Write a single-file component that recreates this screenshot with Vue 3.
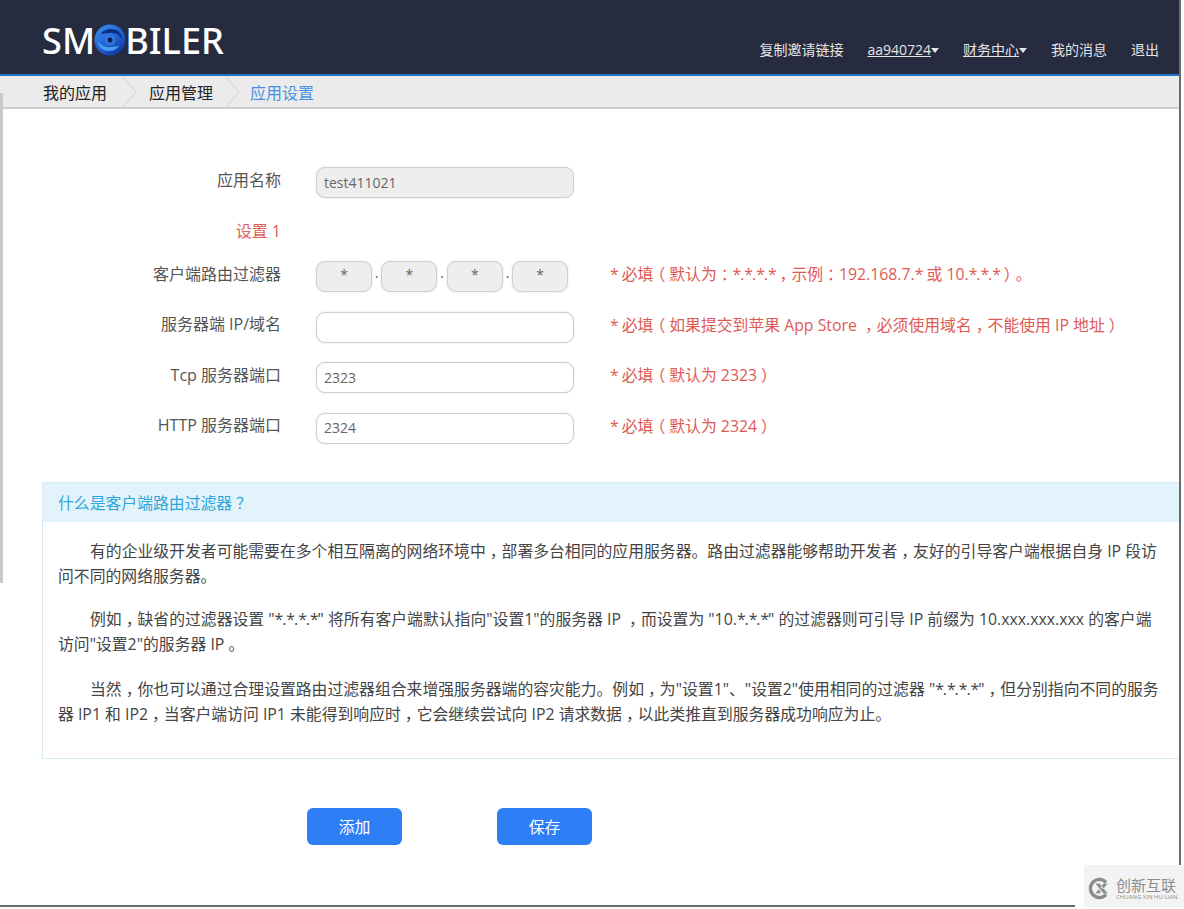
<template>
  <div class="page">
    <header class="topbar">
      <div class="logo">
        <span>SM</span>
        <svg class="logo__mark" width="32" height="32" viewBox="0 0 32 32" aria-hidden="true">
          <defs>
            <linearGradient id="swirl" x1="0.1" y1="0" x2="0.9" y2="1">
              <stop offset="0" stop-color="#3a8fee" />
              <stop offset="0.55" stop-color="#1f5fd0" />
              <stop offset="1" stop-color="#0e2f94" />
            </linearGradient>
          </defs>
          <circle cx="16" cy="16" r="15.5" fill="url(#swirl)" />
          <path d="M7 10C10 5 19 3 25 8c2 2 3 4 3 7-3-5-8-7-13-6-3 0-6 1-8 1z" fill="#0d2c86" />
          <path d="M25 22c-3 5-12 7-18 2-2-2-3-4-3-7 3 5 8 7 13 6 3 0 6-1 8-1z" fill="#4a9ff2" />
          <circle cx="16" cy="16" r="5.5" fill="#3078e0" />
          <circle cx="16" cy="16" r="2.5" fill="#0b1c52" />
        </svg>
        <span>BILER</span>
      </div>
      <nav class="topnav">
        <a>复制邀请链接</a>
        <a class="topnav__menu"><u>aa940724</u><i class="caret"></i></a>
        <a class="topnav__menu"><u>财务中心</u><i class="caret"></i></a>
        <a>我的消息</a>
        <a>退出</a>
      </nav>
    </header>

    <div class="crumbs">
      <template v-for="(c, i) in crumbs" :key="c">
        <span class="crumbs__item" :class="{ 'crumbs__item--on': i === crumbs.length - 1 }">{{ c }}</span>
        <svg v-if="i < crumbs.length - 1" class="crumbs__sep" width="16" height="32" viewBox="0 0 16 32" aria-hidden="true">
          <path d="M1 0l14 16L1 32" fill="none" stroke="#dcdcdc" stroke-width="1.5" />
        </svg>
      </template>
    </div>

    <main class="content">
      <form class="form" @submit.prevent>
        <label class="form__label">应用名称</label>
        <input class="field field--off" value="test411021" readonly />
        <span></span>

        <div class="form__label form__label--red form__label--section">设置 1</div>
        <span></span>
        <span></span>

        <label class="form__label">客户端路由过滤器</label>
        <div class="ip">
          <template v-for="n in 4" :key="n">
            <input class="field field--off ip__part" value="*" readonly />
            <span v-if="n < 4" class="ip__dot">.</span>
          </template>
        </div>
        <div class="form__hint">
          <span v-for="(s, i) in split(filterHint)" :key="i" :class="s.cls">{{ s.text }}</span>
        </div>

        <template v-for="r in rows" :key="r.label">
          <label class="form__label">{{ r.label }}</label>
          <input class="field" :value="r.value" />
          <div class="form__hint">
            <span v-for="(s, i) in split(r.hint)" :key="i" :class="s.cls">{{ s.text }}</span>
          </div>
        </template>
      </form>

      <section class="help">
        <h3 class="help__title">
          <span v-for="(s, i) in split(helpTitle)" :key="i" :class="s.cls">{{ s.text }}</span>
        </h3>
        <div class="help__body">
          <p v-for="(para, n) in paragraphs" :key="n">
            <span v-for="(s, i) in split(para)" :key="i" :class="s.cls">{{ s.text }}</span>
          </p>
        </div>
      </section>

      <div class="actions">
        <button class="btn" type="button">添加</button>
        <button class="btn" type="button">保存</button>
      </div>
    </main>

    <div class="edge-left"></div>
    <div class="watermark">
      <svg width="23" height="23" viewBox="0 0 28 28" aria-hidden="true">
        <path d="M22 6.5A11 11 0 1 0 22 21.5" fill="none" stroke="#8c8c8c" stroke-width="4" />
        <path d="M9 8l5 0 10 12-5 0zM24 8l-5 0-3.5 4 2.5 3zM9 20l5 0 1.5-2-2.5-3z" fill="#8c8c8c" />
      </svg>
      <div class="watermark__text">
        <b>创新互联</b>
        <small>CHUANG XIN HU LIAN</small>
      </div>
    </div>
  </div>
</template>

<script setup>
const crumbs = ["我的应用", "应用管理", "应用设置"]

const filterHint = "* 必填（默认为：*.*.*.*，示例：192.168.7.* 或 10.*.*.*）。"
const helpTitle = "什么是客户端路由过滤器？"

const rows = [
  { label: "服务器端 IP/域名", value: "", hint: "* 必填（如果提交到苹果 App Store ，必须使用域名，不能使用 IP 地址）" },
  { label: "Tcp 服务器端口", value: "2323", hint: "* 必填（默认为 2323）" },
  { label: "HTTP 服务器端口", value: "2324", hint: "* 必填（默认为 2324）" },
]

// | marks where the line wraps, so no span runs over two lines
const paragraphs = [
  "有的企业级开发者可能需要在多个相互隔离的网络环境中，部署多台相同的应用服务器。路由过滤器能够帮助开发者，友好的引导客户端根据自身 IP 段访|问不同的网络服务器。",
  "例如，缺省的过滤器设置 \"*.*.*.*\" 将所有客户端默认指向\"设置1\"的服务器 IP ，而设置为 \"10.*.*.*\" 的过滤器则可引导 IP 前缀为 10.xxx.xxx.xxx 的客户端|访问\"设置2\"的服务器 IP 。",
  "当然，你也可以通过合理设置路由过滤器组合来增强服务器端的容灾能力。例如，为\"设置1\"、\"设置2\"使用相同的过滤器 \"*.*.*.*\"，但分别指向不同的服务|器 IP1 和 IP2，当客户端访问 IP1 未能得到响应时，它会继续尝试向 IP2 请求数据，以此类推直到服务器成功响应为止。",
]

// the original font centres some full-width punctuation and has a narrower asterisk
function split(text) {
  return text.split(/([，：？（）*]|\|)/).filter(t => t && t !== "|").map(t => ({
    text: t,
    cls: t === "*" ? "star" : "，：？（）".includes(t) ? "punct" : "",
  }))
}
</script>

<style>
html, body {
  margin: 0;
  background: #fff;
}
</style>

<style scoped>
.page {
  position: relative;
  width: 1179px;
  height: 905px;
  border-right: 2px solid #6a6a6a;
  border-bottom: 2px solid #6a6a6a;
  font-family: "Open Sans", "Noto Sans CJK SC", sans-serif;
  font-size: 15.83px;
  color: #444;
}

.punct {
  font-feature-settings: "halt";
  padding: 0 0.25em;
}
.star {
  letter-spacing: -1.1px;
}

.topbar {
  height: 76px;
  box-sizing: border-box;
  background: #262b40;
  border-bottom: 2px solid #1f74c9;
  display: flex;
  justify-content: space-between;
  align-items: flex-start;
  padding: 0 20px 0 42px;
}
.logo {
  display: flex;
  align-items: center;
  height: 79px;
  color: #fff;
  font-family: "Noto Sans", sans-serif;
  font-size: 36.2px;
  font-weight: 500;
}
.logo__mark {
  margin: 0 -1px;
}
.topnav {
  display: flex;
  gap: 24px;
  padding-top: 40px;
  font-size: 14px;
  line-height: 20px;
  color: #e4e4e4;
}
.topnav__menu {
  display: flex;
  align-items: center;
}
.caret {
  display: block;
  width: 0;
  height: 0;
  border-left: 4px solid transparent;
  border-right: 4px solid transparent;
  border-top: 5px solid #e4e4e4;
}

.crumbs {
  height: 33px;
  box-sizing: border-box;
  background: #ebebeb;
  border-bottom: 2px solid #cdcdcd;
  display: flex;
  align-items: center;
  padding-left: 43px;
  font-size: 16px;
  color: #222;
}
.crumbs__item--on {
  color: #4a90e2;
}
.crumbs__sep {
  margin: 0 12px 0 14px;
}
.crumbs__sep:nth-of-type(2) {
  margin: 0 10px 0 11px;
}

.content {
  padding-top: 58px;
}

.form {
  display: grid;
  grid-template-columns: 281px 258px 1fr;
  column-gap: 35px;
  row-gap: 19.6px;
  align-items: center;
}
.form__label {
  text-align: right;
  font-size: 16px;
  line-height: 20px;
  color: #555;
  margin-bottom: 6px;
}
.form__label--red {
  color: #e0605a;
}
.form__label--section {
  height: 24px;
  line-height: 26px;
  margin-bottom: 0;
}
.form__hint {
  color: #de5a55;
  margin-left: 1px;
  margin-bottom: 6px;
  white-space: nowrap;
}
.field {
  box-sizing: border-box;
  width: 258px;
  height: 31px;
  border: 1px solid #cfcfcf;
  border-radius: 9px;
  box-shadow: 0 0 2px rgba(0, 0, 0, 0.14);
  padding: 0 7px 1px;
  font: inherit;
  font-size: 14px;
  color: #666;
  background: #fff;
  outline: none;
}
.field--off {
  background: #eee;
}
.ip {
  display: flex;
  align-items: center;
}
.ip__part {
  width: 56px;
  padding-bottom: 4px;
  text-align: center;
}
.ip__dot {
  width: 9.4px;
  margin-bottom: 9px;
  text-align: center;
  font-size: 14px;
  color: #555;
}

.help {
  margin: 38px 0 0 42px;
  border: 1px solid #d7e9f5;
  border-right: 0;
  height: 277px;
  box-sizing: border-box;
}
.help__title {
  margin: 0;
  height: 39px;
  line-height: 40px;
  padding-left: 15px;
  background: #e3f3fb;
  font-size: inherit;
  font-weight: 400;
  color: #2ba6dc;
}
.help__body {
  padding: 17px 15px 0;
}
.help__body p {
  margin: 0 0 18px;
  line-height: 25px;
  text-indent: 32px;
  color: #444;
}
.help__body p:last-child {
  margin-top: 20px;
}

.actions {
  display: flex;
  gap: 95px;
  margin: 49px 0 0 307px;
}
.btn {
  width: 95px;
  height: 37px;
  border: 0;
  border-radius: 6px;
  background: #2e7ff5;
  color: #fff;
  font: inherit;
}

.edge-left {
  position: absolute;
  left: 0;
  top: 93px;
  width: 3px;
  height: 490px;
  background: #c8c8c8;
}

.watermark {
  position: absolute;
  left: 1075px;
  top: 865px;
  width: 109px;
  height: 44px;
  box-sizing: border-box;
  border-left: 9px solid #fff;
  background: #f3f3f3;
  display: flex;
  align-items: center;
  gap: 5px;
  padding: 3px 0 0 4px;
  color: #8c8c8c;
}
.watermark__text {
  display: flex;
  flex-direction: column;
  line-height: 1;
}
.watermark__text b {
  font-size: 15px;
  font-weight: 400;
  white-space: nowrap;
}
.watermark__text small {
  font-size: 6px;
  margin-top: 1px;
  white-space: nowrap;
}
</style>
